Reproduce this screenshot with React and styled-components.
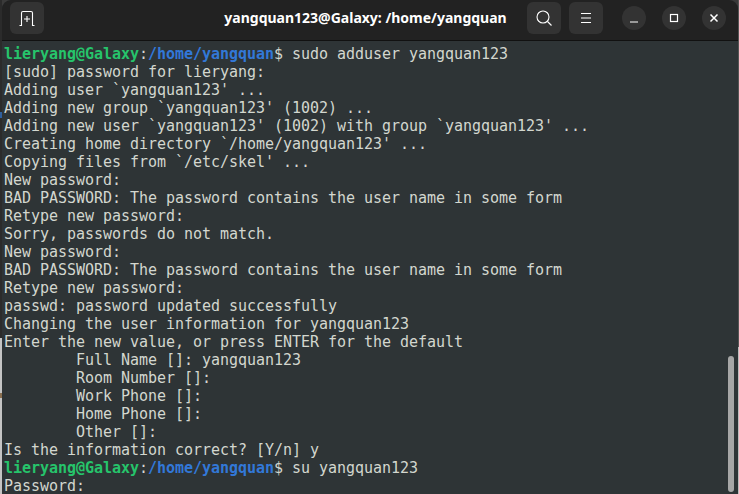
import React from 'react';
import styled, { createGlobalStyle } from 'styled-components';

const Global = createGlobalStyle`
  html, body {
    margin: 0;
    padding: 0;
    background: #222222;
  }
`;

// what shows of the desktop either side of the terminal
const Desktop = styled.div`
  width: 739px;
  height: 494px;
  box-sizing: border-box;
  padding: 0 1px 0 2px;
  overflow: hidden;
  background:
    linear-gradient(#2b2b2b 0 112px, #2f5f9e 112px 118px, #2b2b2b 118px 338px, #c4c4c4 338px 393px, #8a6f50 393px 398px, #c4c4c4 398px) left / 2px 100% no-repeat,
    linear-gradient(#555555 0 347px, #bdbdbd 347px) right / 1px 100% no-repeat,
    #3a3a3a;
`;

const Window = styled.div`
  height: 100%;
  display: flex;
  flex-direction: column;
  overflow: hidden;
  background: #2e3436;
  border-radius: 9px 9px 0 0;
`;

const HeaderBar = styled.div`
  height: 41px;
  flex: none;
  display: flex;
  align-items: center;
  background: #222222;
  border-bottom: 1px solid #111111;
  box-sizing: border-box;
  padding: 0 12px 5px 8px;
`;

const HeadButton = styled.div`
  width: 34px;
  height: 32px;
  margin-right: ${(p) => p.$gap || 0}px;
  display: flex;
  align-items: center;
  justify-content: center;
  background: #333333;
  border-radius: 6px;
`;

const Title = styled.div`
  flex: 1;
  text-align: center;
  padding-left: 160px;
  color: #ffffff;
  font: bold 14px 'Noto Sans', sans-serif;
`;

const RoundButton = styled.div`
  width: 24px;
  height: 24px;
  margin-left: ${(p) => p.$gap}px;
  display: flex;
  align-items: center;
  justify-content: center;
  background: #333333;
  border-radius: 50%;
`;

const Body = styled.div`
  position: relative;
  flex: 1;
  overflow: hidden;
  padding: 4px 0 0 2px;
`;

const Line = styled.div`
  height: 18px;
  line-height: 18px;
  white-space: pre;
  color: #d3d7cf;
  font-family: 'DejaVu Sans Mono', monospace;
  font-size: 15px;
  letter-spacing: -0.03px;
`;

const UserHost = styled.span`
  color: #26c46b;
  font-weight: bold;
`;

const Path = styled.span`
  color: #3278d8;
  font-weight: bold;
`;

const ScrollThumb = styled.div`
  position: absolute;
  right: 4px;
  bottom: 2px;
  width: 6px;
  height: 136px;
  background: #a6a6a6;
  border-radius: 3px;
`;

const Prompt = ({ cmd }) => (
  <Line>
    <UserHost>lieryang@Galaxy</UserHost>:<Path>/home/yangquan</Path>$ {cmd}
  </Line>
);

const lines = [
  { cmd: 'sudo adduser yangquan123' },
  '[sudo] password for lieryang:',
  "Adding user `yangquan123' ...",
  "Adding new group `yangquan123' (1002) ...",
  "Adding new user `yangquan123' (1002) with group `yangquan123' ...",
  "Creating home directory `/home/yangquan123' ...",
  "Copying files from `/etc/skel' ...",
  'New password:',
  'BAD PASSWORD: The password contains the user name in some form',
  'Retype new password:',
  'Sorry, passwords do not match.',
  'New password:',
  'BAD PASSWORD: The password contains the user name in some form',
  'Retype new password:',
  'passwd: password updated successfully',
  'Changing the user information for yangquan123',
  'Enter the new value, or press ENTER for the default',
  '\tFull Name []: yangquan123',
  '\tRoom Number []:',
  '\tWork Phone []:',
  '\tHome Phone []:',
  '\tOther []:',
  'Is the information correct? [Y/n] y',
  { cmd: 'su yangquan123' },
  'Password:',
];

const Icon = ({ children, size = 16 }) => (
  <svg width={size} height={size} viewBox={`0 0 ${size} ${size}`} fill="none" stroke="#ffffff" strokeWidth="1.1">
    {children}
  </svg>
);

export default function App() {
  return (
    <>
      <Global />
      <Desktop>
        <Window>
          <HeaderBar>
            <HeadButton>
              <Icon>
                <path d="M0.5 15.5h2V3a1.5 1.5 0 0 1 1.5-1.5h8A1.5 1.5 0 0 1 13.5 3v12.5h2" />
                <path d="M8 6v6M5 9h6" />
              </Icon>
            </HeadButton>
            <Title>yangquan123@Galaxy: /home/yangquan</Title>
            <HeadButton $gap={8}>
              <Icon size={18}>
                <circle cx="8" cy="8" r="6" />
                <path d="M12.5 12.5l4 4" />
              </Icon>
            </HeadButton>
            <HeadButton>
              <Icon size={12}>
                <path d="M1 1.5h10M1 6h10M1 10.5h10" />
              </Icon>
            </HeadButton>
            <RoundButton $gap={19}>
              <Icon size={12}>
                <path d="M2 10h8" />
              </Icon>
            </RoundButton>
            <RoundButton $gap={16}>
              <Icon size={12}>
                <rect x="2.5" y="2.5" width="7" height="7" strokeWidth="1.2" />
              </Icon>
            </RoundButton>
            <RoundButton $gap={16}>
              <Icon size={12}>
                <path d="M2.5 2.5l7 7M9.5 2.5l-7 7" strokeWidth="1.5" />
              </Icon>
            </RoundButton>
          </HeaderBar>
          <Body>
            {lines.map((l, i) =>
              typeof l === 'string' ? <Line key={i}>{l}</Line> : <Prompt key={i} cmd={l.cmd} />
            )}
            <ScrollThumb />
          </Body>
        </Window>
      </Desktop>
    </>
  );
}
